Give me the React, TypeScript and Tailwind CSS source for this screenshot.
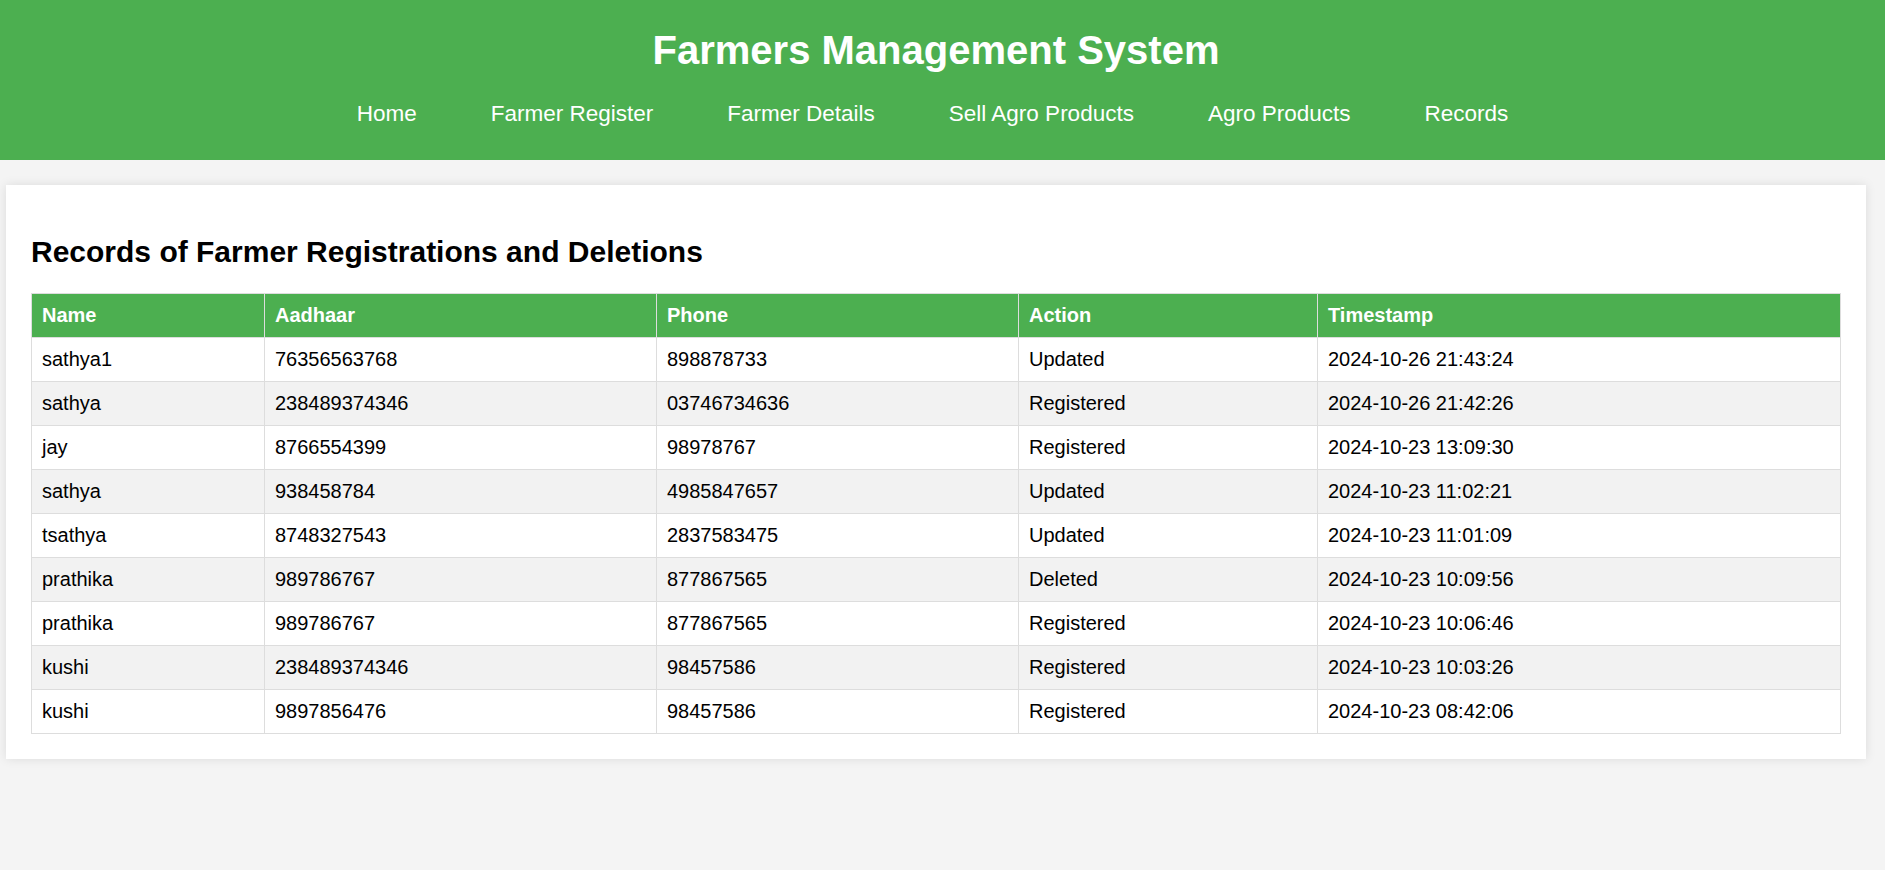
import React from 'react';

type RecordRow = {
  name: string;
  aadhaar: string;
  phone: string;
  action: string;
  timestamp: string;
};

const records: RecordRow[] = [
  { name: 'sathya1', aadhaar: '76356563768', phone: '898878733', action: 'Updated', timestamp: '2024-10-26 21:43:24' },
  { name: 'sathya', aadhaar: '238489374346', phone: '03746734636', action: 'Registered', timestamp: '2024-10-26 21:42:26' },
  { name: 'jay', aadhaar: '8766554399', phone: '98978767', action: 'Registered', timestamp: '2024-10-23 13:09:30' },
  { name: 'sathya', aadhaar: '938458784', phone: '4985847657', action: 'Updated', timestamp: '2024-10-23 11:02:21' },
  { name: 'tsathya', aadhaar: '8748327543', phone: '2837583475', action: 'Updated', timestamp: '2024-10-23 11:01:09' },
  { name: 'prathika', aadhaar: '989786767', phone: '877867565', action: 'Deleted', timestamp: '2024-10-23 10:09:56' },
  { name: 'prathika', aadhaar: '989786767', phone: '877867565', action: 'Registered', timestamp: '2024-10-23 10:06:46' },
  { name: 'kushi', aadhaar: '238489374346', phone: '98457586', action: 'Registered', timestamp: '2024-10-23 10:03:26' },
  { name: 'kushi', aadhaar: '9897856476', phone: '98457586', action: 'Registered', timestamp: '2024-10-23 08:42:06' },
];

const navLinks = ['Home', 'Farmer Register', 'Farmer Details', 'Sell Agro Products', 'Agro Products', 'Records'];

export default function App() {
  return (
    <div className="min-h-[870px] bg-[#f4f4f4] font-['Liberation_Sans',Arial,sans-serif] text-black">
      {/* Header */}
      <header className="h-[160px] bg-[#4caf50] text-white">
        <div className="w-[1872px] flex flex-col items-center pt-[27px]">
          <h1 className="text-[40px] leading-[46px] font-bold">Farmers Management System</h1>
          <nav className="mt-[28px] flex gap-[74px] pr-[7px]">
            {navLinks.map((link) => (
              <a key={link} href="#" className="text-[22.5px] leading-[26px] text-white">
                {link}
              </a>
            ))}
          </nav>
        </div>
      </header>

      {/* Records card */}
      <main className="pt-[25px]">
        <div className="ml-[6px] w-[1860px] bg-white p-[25px] shadow-[0_0_10px_rgba(0,0,0,0.1)]">
          <h2 className="mt-[25px] mb-[24px] text-[30px] leading-[34px] font-bold">
            Records of Farmer Registrations and Deletions
          </h2>
          <table className="w-full table-fixed border-collapse text-[20px] leading-[23px]">
            <thead>
              <tr className="bg-[#4caf50] text-white">
                <th className="w-[233px] border border-[#ddd] p-[10px] text-left font-bold">Name</th>
                <th className="w-[392px] border border-[#ddd] p-[10px] text-left font-bold">Aadhaar</th>
                <th className="w-[362px] border border-[#ddd] p-[10px] text-left font-bold">Phone</th>
                <th className="w-[299px] border border-[#ddd] p-[10px] text-left font-bold">Action</th>
                <th className="border border-[#ddd] p-[10px] text-left font-bold">Timestamp</th>
              </tr>
            </thead>
            <tbody>
              {records.map((r, i) => (
                <tr key={i} className={i % 2 === 1 ? 'bg-[#f2f2f2]' : 'bg-white'}>
                  <td className="border border-[#ddd] p-[10px]">{r.name}</td>
                  <td className="border border-[#ddd] p-[10px]">{r.aadhaar}</td>
                  <td className="border border-[#ddd] p-[10px]">{r.phone}</td>
                  <td className="border border-[#ddd] p-[10px]">{r.action}</td>
                  <td className="border border-[#ddd] p-[10px]">{r.timestamp}</td>
                </tr>
              ))}
            </tbody>
          </table>
        </div>
      </main>
    </div>
  );
}
